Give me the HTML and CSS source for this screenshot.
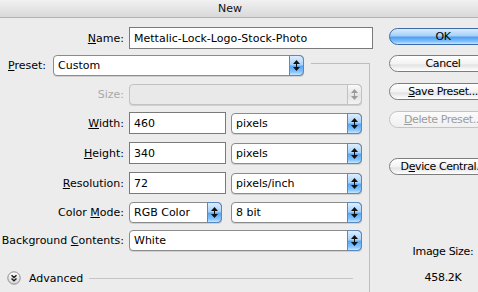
FILE: index.html
```html
<!DOCTYPE html>
<html lang="en">

<head>
    <meta charset="UTF-8">
    <meta name="viewport" content="width=device-width, initial-scale=1.0">
    <title>New</title>
    <link rel="stylesheet" href="styles.css">
</head>

<body>
    <div class="titlebar">New</div>

    <div class="dialog">
        <div class="main">
            <div class="row row-name">
                <label class="label"><u>N</u>ame:</label>
                <input class="text text-name" type="text" value="Mettalic-Lock-Logo-Stock-Photo">
            </div>

            <div class="row row-preset">
                <label class="preset-label"><u>P</u>reset:</label>
                <div class="select select-preset">
                    <span>Custom</span>
                    <span class="spin">
                        <svg width="7" height="11" viewBox="0 0 7 11"><polygon points="0,4 7,4 3.5,0" /><rect x="3" y="4" width="1" height="3" /><polygon points="0,7 7,7 3.5,11" /></svg>
                    </span>
                </div>
                <span class="group-top"></span>
            </div>

            <div class="group">
                <div class="row row-short">
                    <label class="label disabled">Size:</label>
                    <div class="select select-full is-disabled">
                        <span></span>
                        <span class="spin">
                            <svg width="7" height="11" viewBox="0 0 7 11"><polygon points="0,4 7,4 3.5,0" /><rect x="3" y="4" width="1" height="3" /><polygon points="0,7 7,7 3.5,11" /></svg>
                        </span>
                    </div>
                </div>

                <div class="row">
                    <label class="label"><u>W</u>idth:</label>
                    <input class="text text-num" type="text" value="460">
                    <div class="select select-unit">
                        <span>pixels</span>
                        <span class="spin">
                            <svg width="7" height="11" viewBox="0 0 7 11"><polygon points="0,4 7,4 3.5,0" /><rect x="3" y="4" width="1" height="3" /><polygon points="0,7 7,7 3.5,11" /></svg>
                        </span>
                    </div>
                </div>

                <div class="row">
                    <label class="label"><u>H</u>eight:</label>
                    <input class="text text-num" type="text" value="340">
                    <div class="select select-unit">
                        <span>pixels</span>
                        <span class="spin">
                            <svg width="7" height="11" viewBox="0 0 7 11"><polygon points="0,4 7,4 3.5,0" /><rect x="3" y="4" width="1" height="3" /><polygon points="0,7 7,7 3.5,11" /></svg>
                        </span>
                    </div>
                </div>

                <div class="row">
                    <label class="label"><u>R</u>esolution:</label>
                    <input class="text text-num" type="text" value="72">
                    <div class="select select-unit">
                        <span>pixels/inch</span>
                        <span class="spin">
                            <svg width="7" height="11" viewBox="0 0 7 11"><polygon points="0,4 7,4 3.5,0" /><rect x="3" y="4" width="1" height="3" /><polygon points="0,7 7,7 3.5,11" /></svg>
                        </span>
                    </div>
                </div>

                <div class="row row-short">
                    <label class="label">Color <u>M</u>ode:</label>
                    <div class="select select-mode">
                        <span>RGB Color</span>
                        <span class="spin">
                            <svg width="7" height="11" viewBox="0 0 7 11"><polygon points="0,4 7,4 3.5,0" /><rect x="3" y="4" width="1" height="3" /><polygon points="0,7 7,7 3.5,11" /></svg>
                        </span>
                    </div>
                    <div class="select select-unit">
                        <span>8 bit</span>
                        <span class="spin">
                            <svg width="7" height="11" viewBox="0 0 7 11"><polygon points="0,4 7,4 3.5,0" /><rect x="3" y="4" width="1" height="3" /><polygon points="0,7 7,7 3.5,11" /></svg>
                        </span>
                    </div>
                </div>

                <div class="row row-short">
                    <label class="label">Background <u>C</u>ontents:</label>
                    <div class="select select-full">
                        <span>White</span>
                        <span class="spin">
                            <svg width="7" height="11" viewBox="0 0 7 11"><polygon points="0,4 7,4 3.5,0" /><rect x="3" y="4" width="1" height="3" /><polygon points="0,7 7,7 3.5,11" /></svg>
                        </span>
                    </div>
                </div>

                <div class="advanced">
                    <svg class="adv-icon" width="14" height="14" viewBox="0 0 14 14">
                        <defs>
                            <linearGradient id="advFill" x1="0" y1="0" x2="0" y2="1">
                                <stop offset="0" stop-color="#ffffff" />
                                <stop offset="1" stop-color="#d6d6d6" />
                            </linearGradient>
                        </defs>
                        <circle cx="7" cy="7" r="6.2" fill="url(#advFill)" stroke="#8c8c8c" />
                        <path d="M4.5 4.2 L7 6.5 L9.5 4.2 M4.5 7.4 L7 9.7 L9.5 7.4" fill="none" stroke="#1a1a1a" stroke-width="1.4" />
                    </svg>
                    <span>Advanced</span>
                    <span class="adv-line"></span>
                </div>
            </div>
        </div>

        <div class="side">
            <button class="btn btn-default">OK</button>
            <button class="btn btn-cancel">Cancel</button>
            <button class="btn btn-save"><u>S</u>ave Preset...</button>
            <button class="btn btn-delete" disabled><u>D</u>elete Preset...</button>
            <button class="btn btn-device">D<u>e</u>vice Central...</button>

            <div class="image-size">
                <div class="size-label">Image Size:</div>
                <div class="size-value">458.2K</div>
            </div>
        </div>
    </div>
</body>

</html>
```

FILE: styles.css
```css
* {
    box-sizing: border-box;
}

body {
    margin: 0;
    width: 478px;
    height: 292px;
    overflow: hidden;
    background-color: #ececec;
    font-family: "DejaVu Sans", sans-serif;
    font-size: 11px;
    color: #000;
}

.titlebar {
    height: 18px;
    line-height: 17px;
    padding-right: 18px;
    text-align: center;
    font-weight: normal;
    color: #111;
    background: linear-gradient(#f1f1f1, #d9d9d9);
    border-bottom: 1px solid #b2b2b2;
}

.dialog {
    display: flex;
}

.main {
    flex: none;
    width: 370px;
    padding-top: 7px;
}

.row {
    display: flex;
    align-items: center;
    height: 30px;
}

.row-name {
    height: 26px;
}

.row-preset {
    height: 29px;
}

.row-short {
    height: 28px;
}

.label {
    flex: none;
    width: 129px;
    padding-right: 5px;
    text-align: right;
}

.disabled {
    color: #a9a9a9;
}

.preset-label {
    flex: none;
    width: 53px;
    padding-left: 8px;
}

.text {
    flex: none;
    height: 22px;
    margin: 0;
    padding: 0 4px;
    border: 1px solid #7a7a7a;
    background: #fff;
    font: inherit;
    color: #000;
    outline: none;
}

.text-name {
    width: 244px;
}

.text-num {
    width: 97px;
    margin-right: 5px;
}

.select {
    flex: none;
    display: flex;
    align-items: center;
    height: 21px;
    padding-left: 4px;
    border: 1px solid #8b8b8b;
    border-radius: 4px;
    background: #fff;
    box-shadow: 0 1px 0 #d0d0d0;
}

.select span:first-child {
    flex: auto;
}

.select-preset {
    width: 251px;
}

.select-full {
    width: 233px;
}

.select-unit {
    width: 131px;
}

.select-mode {
    width: 93px;
    margin-right: 9px;
}

.spin {
    flex: none;
    display: flex;
    align-items: center;
    justify-content: center;
    width: 15px;
    height: 21px;
    margin: -1px -1px -1px 0;
    border: 1px solid #5a88c0;
    border-radius: 0 5px 5px 0;
    background: linear-gradient(#dcefff 0%, #a9d2f8 45%, #5aa6f2 55%, #86c6ff 85%, #cbe7ff 100%);
}

.spin svg {
    fill: #111;
}

.is-disabled {
    background: #e9e9e9;
    border-color: #c2c2c2;
}

.is-disabled .spin {
    border-color: #c2c2c2;
    background: linear-gradient(#fafafa, #e2e2e2 55%, #f4f4f4);
}

.is-disabled .spin svg {
    fill: #9a9a9a;
}

.group-top {
    flex: auto;
    align-self: flex-end;
    height: 17px;
    margin-left: 7px;
    border-top: 1px solid #bdbdbd;
    border-right: 1px solid #bdbdbd;
}

.group {
    border-right: 1px solid #bdbdbd;
    height: 212px;
}

.advanced {
    display: flex;
    align-items: center;
    height: 20px;
    margin-top: 14px;
    padding-left: 7px;
}

.adv-icon {
    margin-right: 8px;
}

.adv-line {
    flex: auto;
    height: 1px;
    margin: 0 16px 0 6px;
    background: #c6c6c6;
}

.side {
    flex: none;
    display: flex;
    flex-direction: column;
    width: 120px;
    padding-top: 10px;
    padding-left: 19px;
}

.btn {
    width: 108px;
    height: 17px;
    margin: 0;
    padding: 0;
    border: 1px solid #7d7d7d;
    border-radius: 9px;
    background: linear-gradient(#ffffff, #f3f3f3 50%, #e3e3e3 60%, #ffffff);
    font: inherit;
    letter-spacing: -0.4px;
    color: #000;
    line-height: 15px;
    white-space: nowrap;
    text-align: center;
}

.btn-default {
    border-color: #3b6aa6;
    background: linear-gradient(#d9ecff 0%, #a6d0f8 45%, #4f9ff0 55%, #86c4ff 85%, #cde8ff 100%);
}

.btn-cancel {
    margin-top: 10px;
}

.btn-save {
    margin-top: 11px;
}

.btn-delete {
    margin-top: 11px;
    color: #9c9c9c;
    border-color: #c4c4c4;
    background: linear-gradient(#fbfbfb, #f0f0f0);
}

.btn-device {
    margin-top: 30px;
}

.image-size {
    width: 108px;
    margin-top: 70px;
    text-align: center;
    letter-spacing: -0.3px;
}

.size-value {
    margin-top: 13px;
}
```
